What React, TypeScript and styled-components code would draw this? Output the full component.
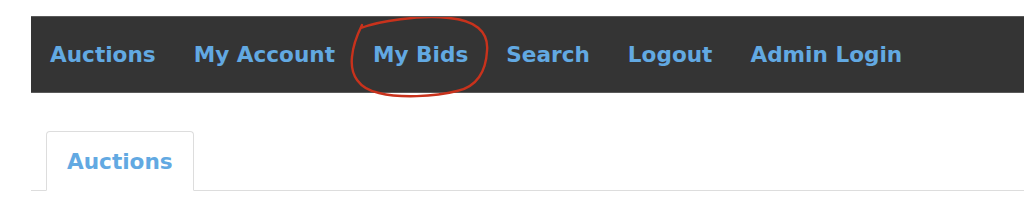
import React from "react";
import styled, { createGlobalStyle } from "styled-components";

const Global = createGlobalStyle`
  html, body { margin: 0; padding: 0; background: #fff; }
  body { font-family: Verdana, "DejaVu Sans", sans-serif; }
`;

const Page = styled.div`
  padding: 16px 0 0 31px;
`;

const NavBar = styled.nav`
  position: relative;
  display: flex;
  align-items: center;
  height: 75px;
  background: #343434;
  border-top: 1px solid #5a5a5a;
  border-bottom: 1px solid #5a5a5a;
`;

const NavLink = styled.a`
  padding: 0 19px;
  color: #62a9e2;
  font-weight: bold;
  font-size: 21.6px;
  text-decoration: none;
  line-height: 1;
`;

const Circle = styled.svg`
  position: absolute;
  left: 318px;
  top: 0px;
  width: 144px;
  height: 82px;
  pointer-events: none;
`;

const Tabs = styled.div`
  display: flex;
  margin-top: 38px;
  border-bottom: 1px solid #dddddd;
  padding-left: 15px;
`;

const Tab = styled.div<{ $active?: boolean }>`
  margin-bottom: -1px;
  padding: 0 20px;
  height: 58px;
  display: flex;
  align-items: center;
  border: 1px solid #dddddd;
  border-bottom-color: ${(p) => (p.$active ? "#fff" : "#ddd")};
  border-radius: 4px 4px 0 0;
  background: #fff;
  color: #62a9e2;
  font-weight: bold;
  font-size: 21.6px;
`;

export default function App() {
  const items = ["Auctions", "My Account", "My Bids", "Search", "Logout", "Admin Login"];
  return (
    <>
      <Global />
      <Page>
        <NavBar>
          {items.map((t) => (
            <NavLink key={t} href="#">
              {t}
            </NavLink>
          ))}
          <Circle viewBox="0 0 144 82">
            <path
              d="M 12 11 C 30 4, 70 -2, 100 1 C 125 3, 140 14, 138 34 C 137 54, 128 70, 108 74 C 85 80, 50 81, 30 76 C 10 72, 1 58, 3 40 C 4 28, 8 18, 13 8"
              fill="none"
              stroke="#c8321c"
              strokeWidth="2.4"
              strokeLinecap="round"
            />
          </Circle>
        </NavBar>
        <Tabs>
          <Tab $active>Auctions</Tab>
        </Tabs>
      </Page>
    </>
  );
}
